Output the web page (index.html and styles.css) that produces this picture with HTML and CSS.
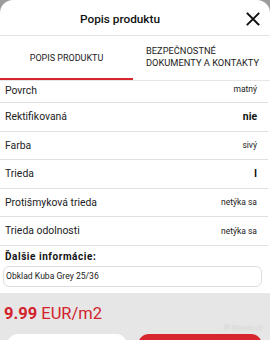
FILE: index.html
```html
<!DOCTYPE html>
<html lang="sk">
<head>
<meta charset="utf-8">
<link rel="stylesheet" href="styles.css">
</head>
<body>
<div class="sheet">
  <header class="header">
    <h1 class="title">Popis produktu</h1>
    <svg class="close" width="14" height="14" viewBox="0 0 14 14"><path d="M1.5 1.5 L12.5 12.5 M12.5 1.5 L1.5 12.5" stroke="#111" stroke-width="1.9" stroke-linecap="square" fill="none"/></svg>
  </header>
  <nav class="tabs">
    <div class="tab tab-active">POPIS PRODUKTU</div>
    <div class="tab tab-second"><span>BEZPEČNOSTNÉ<br>DOKUMENTY A KONTAKTY</span></div>
  </nav>
  <div class="rows">
    <div class="row row-cut"><span class="label">Povrch</span><span class="value">matný</span></div>
    <div class="row"><span class="label">Rektifikovaná</span><span class="value value-bold">nie</span></div>
    <div class="row"><span class="label">Farba</span><span class="value">sivý</span></div>
    <div class="row"><span class="label">Trieda</span><span class="value value-bold">I</span></div>
    <div class="row"><span class="label">Protišmyková trieda</span><span class="value">netýka sa</span></div>
    <div class="row"><span class="label">Trieda odolnosti</span><span class="value">netýka sa</span></div>
  </div>
  <section class="info">
    <div class="info-title">Ďalšie informácie:</div>
    <div class="info-box">Obklad Kuba Grey 25/36</div>
  </section>
  <footer class="footer">
    <div class="price"><b>9.99</b> EUR/m2</div>
    <div class="buttons">
      <div class="btn btn-white"></div>
      <div class="btn btn-red"></div>
    </div>
    <div class="watermark">© Bazos.sk</div>
  </footer>
</div>
</body>
</html>
```

FILE: styles.css
```css
html, body {
  margin: 0;
  padding: 0;
}
body {
  width: 270px;
  height: 340px;
  overflow: hidden;
  background: #9c9c9c;
  font-family: Roboto, "Liberation Sans", Arial, sans-serif;
  color: #222;
}
.sheet {
  position: relative;
  background: #fff;
  border-radius: 13px 13px 0 0;
  height: 340px;
  overflow: hidden;
  display: flex;
  flex-direction: column;
}
.header {
  height: 36px;
  border-bottom: 1px solid #e2e2e2;
  display: flex;
  align-items: center;
  justify-content: center;
  position: relative;
  flex: none;
  padding-right: 30px;
  box-sizing: border-box;
}
.title {
  margin: 0;
  font-size: 11.8px;
  font-weight: 500;
  color: #111;
  padding-top: 3px;
}
.close {
  position: absolute;
  right: 10px;
  top: 12px;
}
.tabs {
  display: flex;
  height: 44px;
  border-bottom: 1px solid #e6e6e6;
  flex: none;
}
.tab {
  flex: 1;
  display: flex;
  align-items: center;
  justify-content: center;
  font-size: 9px;
  color: #222;
  box-sizing: border-box;
  line-height: 12px;
}
.tab-active {
  border-bottom: 2.5px solid #d8262f;
  flex: 0 0 133px;
  padding-top: 2px;
}
.tab-second {
  justify-content: flex-start;
  padding-left: 13px;
  padding-bottom: 3px;
  font-size: 9.3px;
}
.rows {
  flex: none;
  padding-right: 2px;
}
.row {
  height: 27.5px;
  border-bottom: 1px solid #e0e0e0;
  display: flex;
  align-items: center;
  justify-content: space-between;
  padding: 0 11px 0 5px;
}
.row-cut {
  align-items: flex-start;
  padding-top: 3px;
  box-sizing: content-box;
  height: 18px;
}
.label {
  font-size: 10.4px;
  color: #222;
}
.value {
  font-size: 8.5px;
  color: #222;
}
.value-bold {
  font-size: 10.4px;
  font-weight: 700;
  color: #111;
}
.info {
  padding: 5px 8px 6px 3px;
  flex: none;
}
.info-title {
  font-size: 10px;
  font-weight: 700;
  letter-spacing: 0.55px;
  padding-left: 2px;
  color: #111;
  height: 15px;
}
.info-box {
  height: 19px;
  border: 1px solid #dedede;
  border-radius: 6px;
  display: flex;
  align-items: center;
  padding-left: 2px;
  font-size: 8.6px;
  color: #222;
}
.footer {
  flex: 1;
  background: #e6e6e6;
  padding: 11px 8px 0 4px;
  position: relative;
}
.price {
  font-size: 16.5px;
  color: #d3222c;
  line-height: 20px;
}
.price b {
  font-weight: 700;
}
.buttons {
  display: flex;
  gap: 11px;
  margin-top: 10px;
  padding-left: 3px;
}
.btn {
  height: 24px;
  border-radius: 11px;
  flex: 1;
}
.btn-white {
  background: #fff;
  flex: 0 0 120px;
}
.btn-red {
  background: #d8262f;
}
.watermark {
  position: absolute;
  right: 7px;
  top: 30px;
  font-size: 8px;
  line-height: 9px;
  color: rgba(255,255,255,0.7);
  text-shadow: 0 0 1px rgba(0,0,0,0.25);
  font-style: italic;
}
```
